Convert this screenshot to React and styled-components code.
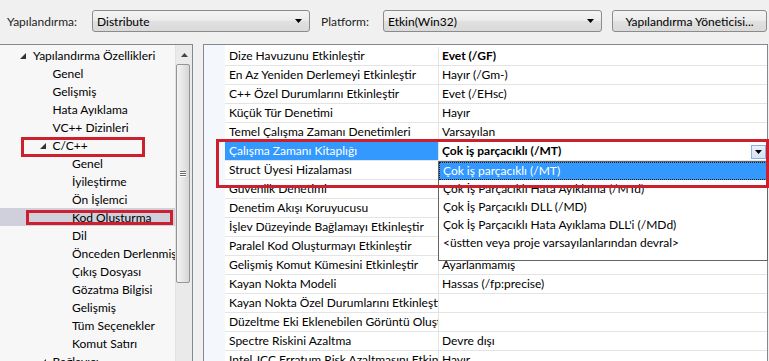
import React from "react";
import styled, { createGlobalStyle } from "styled-components";

const GlobalStyle = createGlobalStyle`
  html, body { margin: 0; padding: 0; }
  body {
    background: #f0f0f0;
    font-family: Lato, "Open Sans", "DejaVu Sans", sans-serif;
    font-size: 12px;
    color: #000;
    overflow: hidden;
  }
`;

const treeItems = [
  { label: "Yapılandırma Özellikleri", level: 0, open: true },
  { label: "Genel", level: 1 },
  { label: "Gelişmiş", level: 1 },
  { label: "Hata Ayıklama", level: 1 },
  { label: "VC++ Dizinleri", level: 1 },
  { label: "C/C++", level: 1, open: true },
  { label: "Genel", level: 2 },
  { label: "İyileştirme", level: 2 },
  { label: "Ön İşlemci", level: 2 },
  { label: "Kod Oluşturma", level: 2, selected: true },
  { label: "Dil", level: 2 },
  { label: "Önceden Derlenmiş Üst Bilgiler", level: 2 },
  { label: "Çıkış Dosyası", level: 2 },
  { label: "Gözatma Bilgisi", level: 2 },
  { label: "Gelişmiş", level: 2 },
  { label: "Tüm Seçenekler", level: 2 },
  { label: "Komut Satırı", level: 2 },
  { label: "Bağlayıcı", level: 1, open: true },
];

const props = [
  ["Dize Havuzunu Etkinleştir", "Evet (/GF)", true],
  ["En Az Yeniden Derlemeyi Etkinleştir", "Hayır (/Gm-)"],
  ["C++ Özel Durumlarını Etkinleştir", "Evet (/EHsc)"],
  ["Küçük Tür Denetimi", "Hayır"],
  ["Temel Çalışma Zamanı Denetimleri", "Varsayılan"],
  ["Çalışma Zamanı Kitaplığı", "Çok iş parçacıklı (/MT)", true, true],
  ["Struct Üyesi Hizalaması", "Varsayılan"],
  ["Güvenlik Denetimi", "Güvenlik Denetimini Etkinleştir (/GS)"],
  ["Denetim Akışı Koruyucusu", ""],
  ["İşlev Düzeyinde Bağlamayı Etkinleştir", ""],
  ["Paralel Kod Oluşturmayı Etkinleştir", ""],
  ["Gelişmiş Komut Kümesini Etkinleştir", "Ayarlanmamış"],
  ["Kayan Nokta Modeli", "Hassas (/fp:precise)"],
  ["Kayan Nokta Özel Durumlarını Etkinleştir", ""],
  ["Düzeltme Eki Eklenebilen Görüntü Oluştur", ""],
  ["Spectre Riskini Azaltma", "Devre dışı"],
  ["Intel JCC Erratum Risk Azaltmasını Etkinleştir", "Hayır"],
];

const options = [
  "Çok iş parçacıklı (/MT)",
  "Çok İş Parçacıklı Hata Ayıklama (/MTd)",
  "Çok İş Parçacıklı DLL (/MD)",
  "Çok İş Parçacıklı Hata Ayıklama DLL'i (/MDd)",
  "<üstten veya proje varsayılanlarından devral>",
];

const DownArrow = () => (
  <svg width="7" height="4" viewBox="0 0 7 4">
    <polygon points="0,0 7,0 3.5,4" fill="#000" />
  </svg>
);

export default function App() {
  return (
    <Window>
      <GlobalStyle />
      <Toolbar>
        <Label $w={85}>Yapılandırma:</Label>
        <Combo $w={218}>
          <span>Distribute</span>
          <DownArrow />
        </Combo>
        <Label $w={62} style={{ marginLeft: 11 }}>Platform:</Label>
        <Combo $w={219}>
          <span>Etkin(Win32)</span>
          <DownArrow />
        </Combo>
        <Button>Yapılandırma Yöneticisi...</Button>
      </Toolbar>

      <Body>
        <TreePanel>
          <TreeList>
            {treeItems.map((item, i) => (
              <TreeRow key={i} $level={item.level} $selected={item.selected}>
                <Expander>
                  {item.open && (
                    <svg width="6" height="6" viewBox="0 0 6 6">
                      <polygon points="6,0 6,6 0,6" fill="#333" />
                    </svg>
                  )}
                </Expander>
                {item.label}
              </TreeRow>
            ))}
          </TreeList>
          <ScrollTrack>
            <ScrollButton>
              <svg width="7" height="4" viewBox="0 0 7 4">
                <polygon points="3.5,0 7,4 0,4" fill="#444" />
              </svg>
            </ScrollButton>
            <Thumb>
              <Grip />
              <Grip />
              <Grip />
            </Thumb>
          </ScrollTrack>
        </TreePanel>

        <GridPanel>
          {props.map(([name, value, bold, selected], i) => (
            <GridRow key={i}>
              <span />
              <NameCell $selected={selected}>{name}</NameCell>
              <ValueCell $bold={bold}>
                <ValueText>{value}</ValueText>
                {selected && (
                  <DropButton>
                    <DownArrow />
                  </DropButton>
                )}
              </ValueCell>
            </GridRow>
          ))}
        </GridPanel>
      </Body>

      <DropList>
        {options.map((o, i) => (
          <DropItem key={i} $active={i === 0}>{o}</DropItem>
        ))}
      </DropList>

      <Marker $x={21} $y={137} $w={124} $h={20} />
      <Marker $x={26} $y={210} $w={147} $h={15} />
      <Marker $x={216} $y={139} $w={553} $h={49} />
    </Window>
  );
}

const Window = styled.div`
  position: relative;
  width: 769px;
  height: 361px;
  overflow: hidden;
  background: #f0f0f0;
`;

const Toolbar = styled.div`
  display: flex;
  align-items: center;
  height: 22px;
  padding: 10px 0 12px 7px;
`;

const Label = styled.span`
  flex: none;
  width: ${(p) => p.$w}px;
  color: #1e1e1e;
`;

const Combo = styled.div`
  flex: none;
  width: ${(p) => p.$w}px;
  height: 22px;
  box-sizing: border-box;
  display: flex;
  align-items: center;
  justify-content: space-between;
  padding: 0 7px 0 4px;
  border: 1px solid #8b8b8b;
  border-radius: 3px;
  background: linear-gradient(#f4f4f4, #ebebeb 50%, #e0e0e0 51%, #dadada);
`;

const Button = styled.div`
  flex: none;
  margin-left: 10px;
  width: 155px;
  height: 22px;
  box-sizing: border-box;
  display: flex;
  align-items: center;
  justify-content: center;
  border: 1px solid #8b8b8b;
  border-radius: 3px;
  background: linear-gradient(#f4f4f4, #ebebeb 50%, #e0e0e0 51%, #dadada);
`;

const Body = styled.div`
  display: flex;
  height: 317px;
`;

const TreePanel = styled.div`
  flex: none;
  width: 192px;
  display: flex;
  border-top: 1px solid #828790;
  border-right: 1px solid #828790;
  background: #f7f7f7;
`;

const TreeList = styled.div`
  flex: 1;
  min-width: 0;
  padding-top: 1px;
  overflow: hidden;
`;

const TreeRow = styled.div`
  display: flex;
  align-items: center;
  height: 18px;
  padding-left: ${(p) => 20 + p.$level * 19.5}px;
  white-space: nowrap;
  background: ${(p) => (p.$selected ? "#cfd0dc" : "transparent")};
`;

const Expander = styled.span`
  flex: none;
  width: 13px;
  display: flex;
  align-items: center;
  padding-top: 1px;
`;

const ScrollTrack = styled.div`
  flex: none;
  width: 16px;
  background: #eaeaea;
  border-left: 1px solid #e2e2e2;
`;

const ScrollButton = styled.div`
  height: 19px;
  display: flex;
  align-items: center;
  justify-content: center;
`;

const Thumb = styled.div`
  width: 12px;
  height: 217px;
  margin-left: 0;
  border: 1px solid #959595;
  border-radius: 2px;
  background: linear-gradient(to right, #f3f3f3, #e6e6e6 50%, #d6d6d6);
  display: flex;
  flex-direction: column;
  align-items: center;
  justify-content: center;
  gap: 1px;
`;

const Grip = styled.div`
  width: 6px;
  height: 1px;
  background: #6a6a6a;
  box-shadow: 0 1px 0 #fff;
`;

const GridPanel = styled.div`
  flex: 1;
  margin-left: 10px;
  margin-right: 1px;
  padding-top: 2px;
  border: 1px solid #828790;
  border-bottom: none;
  overflow: hidden;
  background: linear-gradient(to right, #f4f7fc 21px, #ffffff 21px);
`;

const GridRow = styled.div`
  display: grid;
  grid-template-columns: 21px 214px 1fr;
  height: 19px;
`;

const NameCell = styled.div`
  box-sizing: border-box;
  padding-left: 4px;
  line-height: 18px;
  white-space: nowrap;
  overflow: hidden;
  border-bottom: 1px solid #e4e4e4;
  border-right: 1px solid #e4e4e4;
  background: ${(p) => (p.$selected ? "#3399ff" : "transparent")};
  color: ${(p) => (p.$selected ? "#fff" : "#000")};
`;

const ValueCell = styled.div`
  display: flex;
  align-items: flex-end;
  justify-content: space-between;
  padding-left: 3px;
  min-width: 0;
  border-bottom: 1px solid #e4e4e4;
  font-weight: ${(p) => (p.$bold ? 700 : 400)};
`;

const ValueText = styled.span`
  align-self: center;
  line-height: 18px;
  white-space: nowrap;
`;

const DropButton = styled.div`
  flex: none;
  width: 13px;
  height: 12px;
  margin: 0 1px 1px 0;
  display: flex;
  align-items: center;
  justify-content: center;
  border: 1px solid #8fb0d8;
  background: linear-gradient(#e8f1fb, #d4e4f6);
`;

const DropList = styled.div`
  position: absolute;
  left: 438px;
  top: 161px;
  width: 330px;
  height: 100px;
  box-sizing: border-box;
  border: 1px solid #646464;
  background: #fff;
`;

const DropItem = styled.div`
  box-sizing: border-box;
  height: 18px;
  line-height: 16px;
  padding-left: 3px;
  white-space: nowrap;
  border: 1px ${(p) => (p.$active ? "dotted #1a1a1a" : "solid transparent")};
  background: ${(p) => (p.$active ? "#3399ff" : "transparent")};
  color: ${(p) => (p.$active ? "#fff" : "#000")};
`;

const Marker = styled.div`
  position: absolute;
  left: ${(p) => p.$x}px;
  top: ${(p) => p.$y}px;
  width: ${(p) => p.$w}px;
  height: ${(p) => p.$h}px;
  box-sizing: border-box;
  border: 3px solid #cc202e;
  pointer-events: none;
`;
